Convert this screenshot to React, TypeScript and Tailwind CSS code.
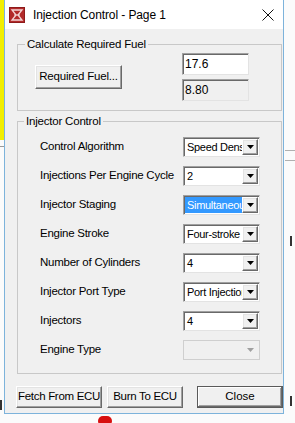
import React from 'react';
import clsx from 'clsx';

const rows = [
  { label: 'Control Algorithm', value: 'Speed Density' },
  { label: 'Injections Per Engine Cycle', value: '2' },
  { label: 'Injector Staging', value: 'Simultaneous', selected: true },
  { label: 'Engine Stroke', value: 'Four-stroke' },
  { label: 'Number of Cylinders', value: '4' },
  { label: 'Injector Port Type', value: 'Port Injection' },
  { label: 'Injectors', value: '4' },
  { label: 'Engine Type', value: '', disabled: true },
];

const raised =
  'border border-t-white border-l-white border-r-[#696969] border-b-[#696969] shadow-[inset_-1px_-1px_0_#a0a0a0,inset_1px_1px_0_#e3e3e3]';
const sunken =
  'border border-t-[#a0a0a0] border-l-[#a0a0a0] border-r-[#e3e3e3] border-b-[#e3e3e3] shadow-[inset_1px_1px_0_#696969]';

function AppIcon() {
  return (
    <svg width="16" height="16" viewBox="0 0 16 16">
      <rect x="0" y="0" width="16" height="16" fill="#8e1b1b" />
      <rect x="1" y="1" width="14" height="14" fill="#b22a2a" />
      <path d="M3 3 L13 3 L9 8 L13 13 L3 13 L7 8 Z" fill="none" stroke="#f4d6d6" strokeWidth="1.3" />
      <path d="M5 8 L11 8" stroke="#f4d6d6" strokeWidth="1" />
    </svg>
  );
}

function Combo({ value, selected, disabled }: { value: string; selected?: boolean; disabled?: boolean }) {
  return (
    <div
      className={clsx(
        'flex h-[20px] w-[77px] p-[1px]',
        disabled ? 'border border-[#cfcfcf] bg-[#f0f0f0]' : clsx(sunken, 'bg-white')
      )}
    >
      <div
        className={clsx(
          'flex-1 overflow-hidden whitespace-nowrap pl-[2px] text-[11px] leading-[16px] tracking-[-0.3px]',
          selected && 'bg-[#3399ff] text-white'
        )}
      >
        {value}
      </div>
      <div
        className={clsx(
          'flex w-[16px] items-center justify-center bg-[#f0f0f0]',
          !disabled && raised
        )}
      >
        <svg width="7" height="4" viewBox="0 0 7 4">
          <path d="M0 0 L7 0 L3.5 4 Z" fill={disabled ? '#a0a0a0' : '#000'} />
        </svg>
      </div>
    </div>
  );
}

export default function App() {
  return (
    <div
      className="relative h-[423px] w-[295px] overflow-hidden bg-[#fbfbfb] text-[11px] text-black"
      style={{ fontFamily: '"Liberation Sans", Arial, sans-serif' }}
    >
      {/* desktop behind the dialog */}
      <div className="absolute left-0 top-0 h-[140px] w-[5px] bg-[#f2ee00]" />
      <div className="absolute left-0 top-[146px] h-[1px] w-[5px] bg-[#9a9a9a]" />
      <div className="absolute left-0 top-[400px] h-[10px] w-[2px] bg-[#333]" />
      <div className="absolute left-[285px] top-[150px] h-[1px] w-[10px] bg-[#b0b0b0]" />
      <div className="absolute left-[285px] top-[160px] h-[1px] w-[10px] bg-[#b0b0b0]" />
      <div className="absolute left-[290px] top-[236px] h-[10px] w-[2px] bg-[#333]" />
      <div className="absolute left-[290px] top-[396px] h-[10px] w-[2px] bg-[#333]" />
      <div className="absolute left-[98px] top-[416px] h-[10px] w-[14px] rounded-full bg-[#d81010]" />

      {/* dialog window */}
      <div className="absolute left-[4px] top-0 flex h-[414px] w-[280px] flex-col border-x border-b border-[#7db3db] bg-[#f0f0f0]">
        <div className="flex h-[29px] items-center bg-white pl-[4px] pr-[8px]">
          <AppIcon />
          <span className="ml-[8px] flex-1 text-[12px] tracking-[-0.1px]">Injection Control - Page 1</span>
          <svg width="12" height="12" viewBox="0 0 12 12" className="mr-[1px]">
            <path d="M0.5 0.5 L11.5 11.5 M11.5 0.5 L0.5 11.5" stroke="#111" strokeWidth="1" />
          </svg>
        </div>

        <div className="flex flex-col pl-[12px]">
          <fieldset className="mt-[8px] w-[265px] border border-[#c8c8c8] pb-[9px]">
            <legend className="ml-[7px] px-[2px] text-[11.5px] leading-[14px] tracking-[-0.2px]">Calculate Required Fuel</legend>
            <div className="flex items-center pt-[2px]">
              <button className={clsx(raised, 'ml-[17px] h-[24px] w-[87px] whitespace-nowrap bg-[#f0f0f0] text-[11.5px] tracking-[-0.2px]')}>
                Required Fuel...
              </button>
              <div className="ml-[60px] flex flex-col gap-[4px]">
                <div className={clsx(sunken, 'h-[22px] w-[67px] bg-white pl-[2px] text-[12px] leading-[20px]')}>17.6</div>
                <div className={clsx(sunken, 'h-[22px] w-[67px] bg-[#f0f0f0] pl-[2px] text-[12px] leading-[20px]')}>8.80</div>
              </div>
            </div>
          </fieldset>

          <fieldset className="mt-[3px] w-[265px] border border-[#c8c8c8] pb-[13px]">
            <legend className="ml-[6px] px-[2px] text-[11.5px] leading-[14px] tracking-[-0.2px]">Injector Control</legend>
            <div className="flex flex-col gap-[9px] pt-[9px]">
              {rows.map((r) => (
                <div key={r.label} className="flex items-center pl-[22px]">
                  <span className="w-[143px] whitespace-nowrap text-[11.5px] tracking-[-0.25px]">{r.label}</span>
                  <Combo value={r.value} selected={r.selected} disabled={r.disabled} />
                </div>
              ))}
            </div>
          </fieldset>

          <div className="mt-[12px] flex items-center">
            <button className={clsx(raised, '-ml-[1px] h-[22px] w-[86px] whitespace-nowrap bg-[#f0f0f0] text-[11.5px] tracking-[-0.3px]')}>
              Fetch From ECU
            </button>
            <button className={clsx(raised, 'ml-[5px] h-[22px] w-[76px] whitespace-nowrap bg-[#f0f0f0] text-[11.5px] tracking-[-0.3px]')}>
              Burn To ECU
            </button>
            <button className="ml-[14px] h-[22px] w-[86px] whitespace-nowrap border border-[#5a5a5a] bg-[#f0f0f0] text-[11.5px] shadow-[inset_-1px_-1px_0_#696969,inset_1px_1px_0_#ffffff,inset_-2px_-2px_0_#a0a0a0]">
              Close
            </button>
          </div>
        </div>
      </div>
    </div>
  );
}
